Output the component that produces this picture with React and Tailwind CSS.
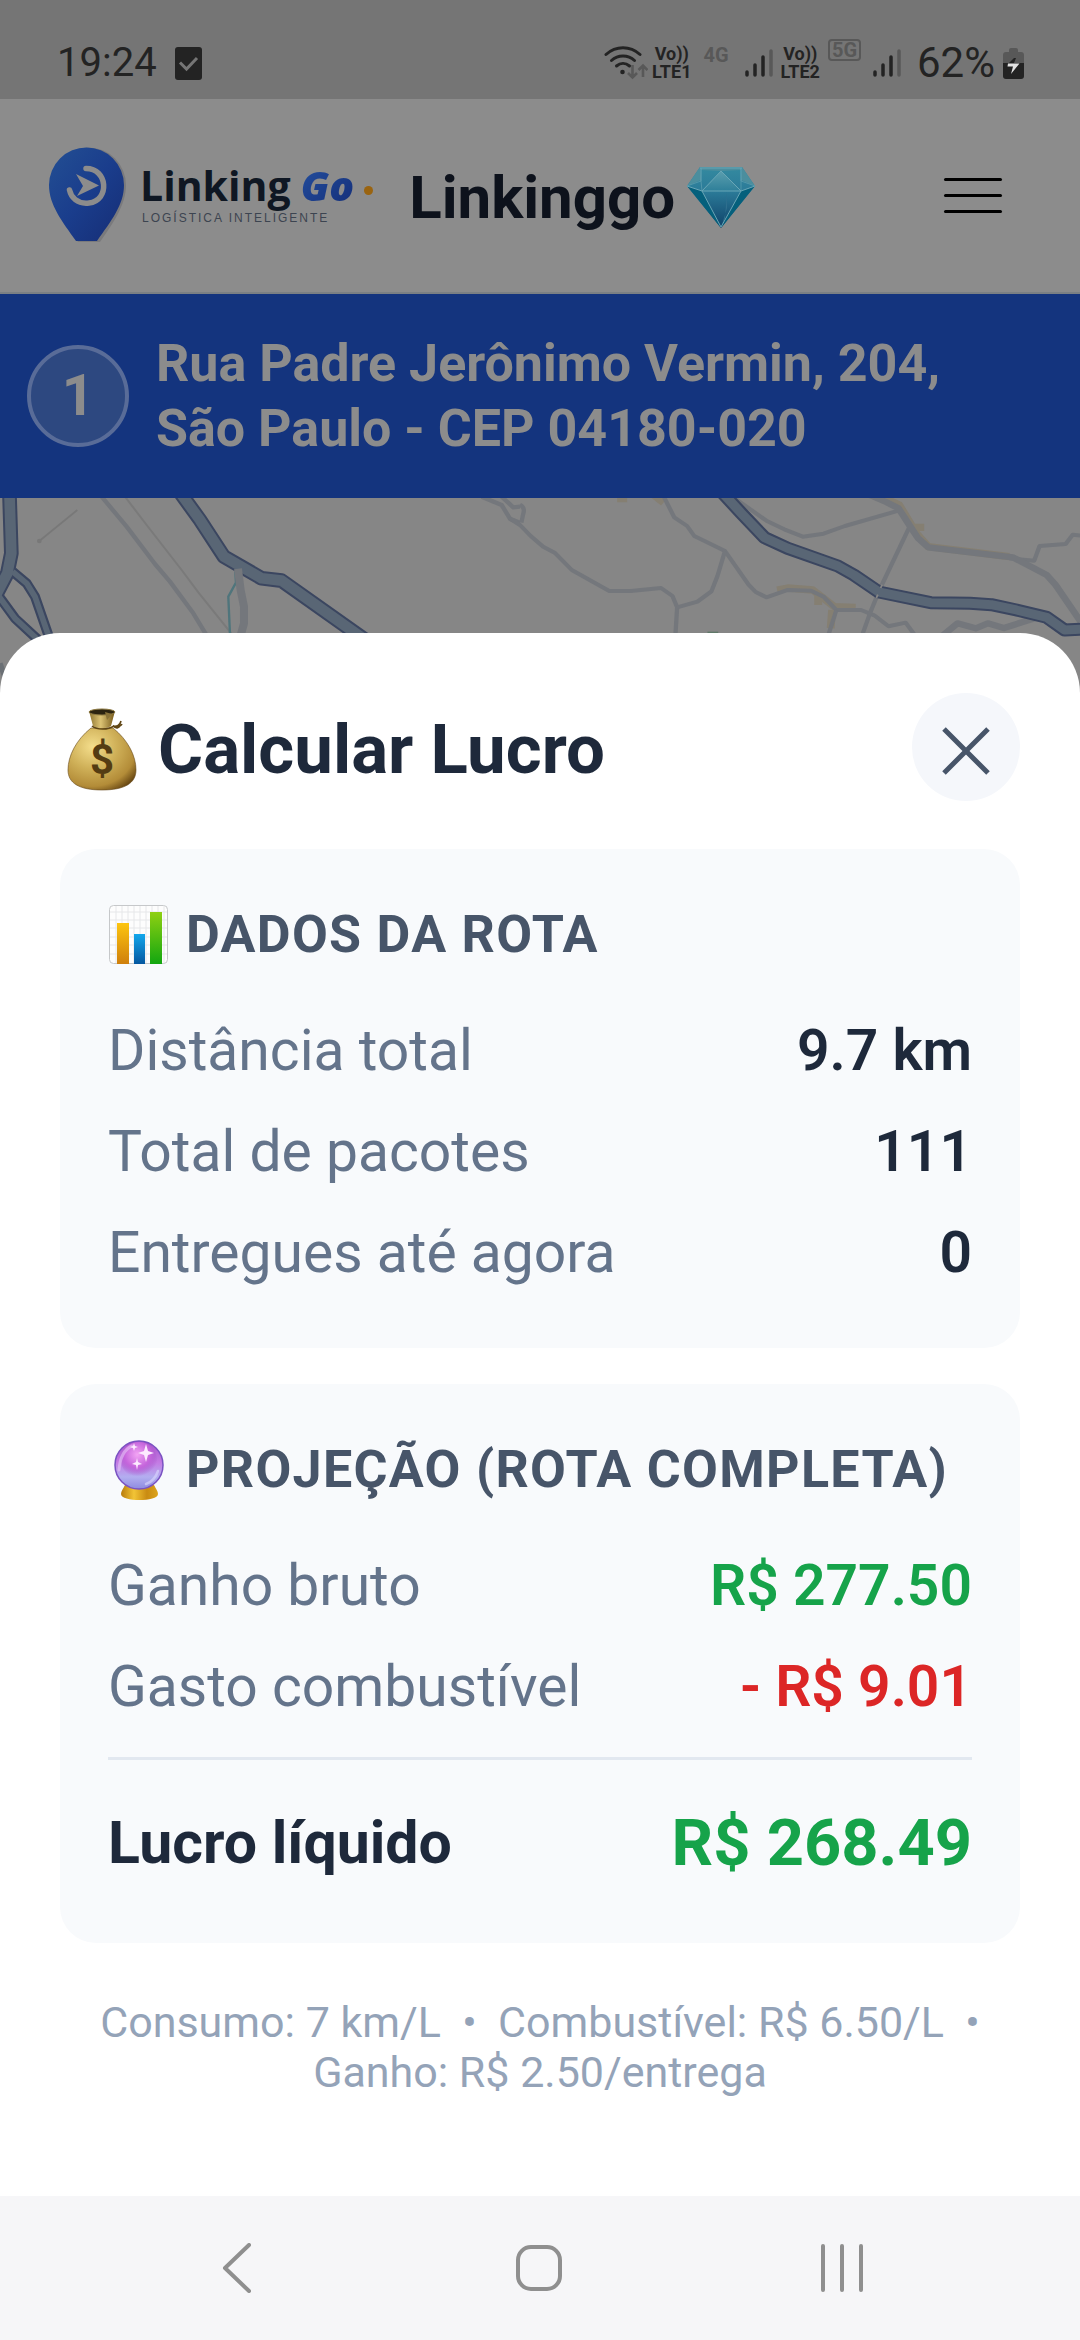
import React from "react";

function PhoneCheckIcon() {
  return (
    <svg viewBox="0 0 27 33" className="h-[33px] w-[27px]" aria-hidden="true">
      <rect width="27" height="33" rx="3" fill="#232323" />
      <path d="M5 15.5 11.5 22 22 11" fill="none" stroke="#757575" strokeWidth="3" />
    </svg>
  );
}

function WifiIcon() {
  return (
    <svg viewBox="0 0 44 34" className="h-[34px] w-[44px]" aria-hidden="true">
      <g fill="none" stroke="#232323" strokeWidth="3" strokeLinecap="round">
        <path d="M2 8.5C12-.5 26-.5 36 8.5" />
        <path d="M7.500 14.500C14 8.500 24 8.500 30.500 14.500" />
        <path d="M12.500 20C16.500 16.500 21.500 16.500 25.500 20" />
      </g>
      <circle cx="18.500" cy="26" r="2.300" fill="#232323" />
      <g fill="none" stroke="#585858" strokeWidth="2.600">
        <path d="M28.500 19v12M24 27l4.500 4.500L33 27M39 31V19.500M34.500 24l4.500-4.500L43.500 24" />
      </g>
    </svg>
  );
}

function SignalIcon() {
  return (
    <svg viewBox="0 0 28 30" className="h-[30px] w-[28px]" aria-hidden="true">
      <g strokeWidth="3.500" strokeLinecap="round" stroke="#232323">
        <path d="M2 24v3M10 17v10M18 9v18" />
        <path d="M26 3v24" stroke="#585858" />
      </g>
    </svg>
  );
}

function BatteryIcon() {
  return (
    <svg viewBox="0 0 21 31" className="h-[31px] w-[21px]" aria-hidden="true">
      <path d="M6 2a2 2 0 0 1 2-2h5a2 2 0 0 1 2 2v2h3a3 3 0 0 1 3 3v9H0V7a3 3 0 0 1 3-3h3z" fill="#585858" />
      <path d="M0 15h21v13a3 3 0 0 1-3 3H3a3 3 0 0 1-3-3z" fill="#232323" />
      <path d="M11 10h2l-2 5H6z" fill="#232323" />
      <path d="M5 15.500h11.500L8 26l2-7.500H4.500z" fill="#e2e2e2" />
    </svg>
  );
}

function VoLte({ line }) {
  return (
    <span className="flex flex-col items-center text-[18px] leading-[18px] font-bold text-[#232323]">
      <span>Vo))</span>
      <span>{line}</span>
    </span>
  );
}

function StatusBar() {
  return (
    <div className="flex h-[99px] items-end justify-between bg-[#757575] pr-14 pb-3 pl-[57px] text-[#232323]">
      <div className="flex items-center gap-[18px]">
        <span className="text-[40px] leading-[48px]">19:24</span>
        <PhoneCheckIcon />
      </div>
      <div className="flex h-12 items-center">
        <WifiIcon />
        <span className="ml-1">
          <VoLte line="LTE1" />
        </span>
        <span className="ml-3 self-start text-[20px] leading-[32px] font-bold text-[#585858]">4G</span>
        <span className="ml-4">
          <SignalIcon />
        </span>
        <span className="ml-2">
          <VoLte line="LTE2" />
        </span>
        <span className="ml-2 self-start rounded-[4px] border-2 border-[#585858] px-[2px] text-[20px] leading-[18px] font-bold text-[#585858]">
          5G
        </span>
        <span className="ml-3">
          <SignalIcon />
        </span>
        <span className="ml-4 text-[42px] leading-[48px]">62%</span>
        <span className="ml-2">
          <BatteryIcon />
        </span>
      </div>
    </div>
  );
}

function PinLogo() {
  return (
    <svg viewBox="0 0 80 98" className="h-[98px] w-[80px] shrink-0" aria-hidden="true">
      <defs>
        <linearGradient id="pin" x1="0" y1="0" x2="1" y2="1">
          <stop offset="0" stopColor="#234f93" />
          <stop offset="0.500" stopColor="#1a3d8c" />
          <stop offset="1" stopColor="#162d75" />
        </linearGradient>
      </defs>
      <path d="M30 95C16 74 3 58 3 38a37.500 37.500 0 0 1 75 0c0 20-13 38-26 57z" fill="#7a7a7c" />
      <path d="M28 94C14 74 1 58 1 38a37.500 37.500 0 0 1 75 0c0 20-13 36-27 56z" fill="url(#pin)" />
      <path
        d="M38 21.500c22 0 24 32 3 34.500-12 1.500-18-6-19.500-13"
        fill="none"
        stroke="#8c8c8c"
        strokeWidth="5.500"
        strokeLinecap="round"
      />
      <path d="M28 27l23 11.500L29 49l6-10z" fill="#8c8c8c" />
    </svg>
  );
}

function Diamond() {
  return (
    <svg viewBox="0 0 68 61" className="h-[61px] w-[68px] shrink-0" role="img" aria-label="Diamante">
      <defs>
        <linearGradient id="gem" x1="0" y1="0" x2="0" y2="1">
          <stop offset="0" stopColor="#348aa0" />
          <stop offset="0.400" stopColor="#2b7a98" />
          <stop offset="1" stopColor="#0f4269" />
        </linearGradient>
        <linearGradient id="gemTop" x1="0" y1="0" x2="0" y2="1">
          <stop offset="0" stopColor="#5b9eae" />
          <stop offset="1" stopColor="#2e7f99" />
        </linearGradient>
      </defs>
      <path d="M13 0h42l13 19-34 42L0 19z" fill="url(#gem)" />
      <path d="M0 19l15 5 19 37zM68 19l-14 5-20 37z" fill="#05607c" />
      <path d="M34 4l20 20H15z" fill="url(#gemTop)" />
      <path d="M13 0h42l-1 3-20 1-20-1zM0 19l13-19 1 13zM68 19L55 0l-1 13z" fill="#4b8e9e" />
      <path d="M40 25l-2 26-4 10 6-20z" fill="#2f6f8e" />
      <g fill="none" stroke="#69a6b6" strokeWidth="1">
        <path d="M13 1h42M14 1v13M54 1v13M34 4L15 24h39zM0 19l15 5 19 36 20-36 14-5" />
        <path d="M0 19l14-5 1 10M68 19l-14-5v10" strokeOpacity="0.600" />
      </g>
    </svg>
  );
}

function Header() {
  return (
    <header className="flex h-[195px] items-center justify-between border-b-2 border-[#7b8084] bg-[#8c8c8c] pr-[72px] pl-12">
      <div className="flex items-center">
        <PinLogo />
        <div className="ml-3 flex flex-col pb-1.5">
          <div className="flex items-baseline font-['Open_Sans'] text-[41px] leading-[50px] font-bold text-[#0f1723]">
            <span>Linking</span>
            <span className="ml-2.5 bg-linear-to-br from-[#2450a0] to-[#142c76] bg-clip-text pr-1 font-extrabold text-transparent italic">
              Go
            </span>
            <span className="mt-3 ml-1.5 size-[9px] self-center rounded-full bg-[#9a6410]" />
          </div>
          <span className="pl-0.5 font-['Liberation_Sans'] text-[12px] leading-[16px] tracking-[2px] text-[#3c4450]">
            LOGÍSTICA INTELIGENTE
          </span>
        </div>
        <h1 className="ml-9 pt-1 text-[60px] leading-[72px] font-bold text-[#0d121c]">Linkinggo</h1>
        <span className="ml-3 pt-1">
          <Diamond />
        </span>
      </div>
      <button type="button" aria-label="Menu" className="flex flex-col gap-[13px] p-1.5">
        <span className="h-[3px] w-[58px] rounded-full bg-black" />
        <span className="h-[3px] w-[58px] rounded-full bg-black" />
        <span className="h-[3px] w-[58px] rounded-full bg-black" />
      </button>
    </header>
  );
}

function StopBanner() {
  return (
    <div className="flex h-[204px] items-center gap-[27px] bg-[#14347e] px-[27px]">
      <span className="flex size-[102px] shrink-0 items-center justify-center rounded-full border-4 border-[#596c98] bg-[#2d4880] text-[57px] font-bold text-[#8c8c8c]">
        1
      </span>
      <p className="text-[52px] leading-[65px] font-bold text-[#8c8c8c]">
        Rua Padre Jerônimo Vermin, 204,
        <br />
        São Paulo - CEP 04180-020
      </p>
    </div>
  );
}

const HIGHWAYS_LEFT = [
  ["M28 0 L34 190 L22 250 L-20 330", 36],
  ["M535 0 L600 90 L672 200 L785 265 L845 272 L1110 460", 36],
];

const HIGHWAYS_LEFT_THIN = ["M38 245 L80 280 L105 320 L150 450", "M-10 310 L45 385 L115 450"];

const HIGHWAY_RIGHT =
  "M560 0 L620 70 L685 143 L750 175 L890 228 L935 255 L1005 306 L1150 338 L1260 340 L1320 344 L1390 360 L1475 382 L1525 420 L1580 417";

const ROADS_RIGHT = [
  "M-30 85 L0 105 L30 138 L65 170 L97 188 L145 240 L250 303 L310 303 L395 294 L427 318 L440 352 L435 440",
  "M398 10 L432 82 L468 108 L488 138 L574 183 L640 284 L660 306 L690 322 L750 300 L815 302 L850 320 L886 360 L955 360 L992 376 L1032 409 L1080 398 L1105 435",
  "M574 183 L553 258 L536 304 L497 335 L440 352",
  "M600 24 L690 92 L740 118 L792 140 L850 131 L910 108 L1060 62",
  "M1090 112 L1010 292 L980 370 L960 430",
  "M886 360 L862 440",
  "M1370 205 L1440 212 L1455 168 L1528 162 L1548 134 L1580 138",
];

const ROADS_RIGHT_WIDE = [
  "M980 15 L1025 36 L1060 55 L1092 108 L1115 145 L1143 172 L1380 202 L1475 255 L1500 285 L1570 395",
  "M1180 440 L1225 400 L1276 415 L1310 400 L1355 414 L1450 382",
];

function RouteMap() {
  return (
    <svg
      viewBox="0 0 1080 195"
      preserveAspectRatio="xMidYMin slice"
      className="h-[195px] w-full bg-[#868686]"
      role="img"
      aria-label="Mapa da rota"
    >
      <g transform="translate(0 -8) scale(0.3333)" fill="none" strokeLinejoin="round">
        <path d="M118 153L232 60" stroke="#787878" strokeWidth="5" />
        <circle cx="118" cy="153" r="7" fill="#787878" />
        <path d="M375 20L440 105L545 240L595 307L695 432" stroke="#7a7a7a" strokeWidth="6" />
        <path d="M305 20L380 110L465 222L510 275L580 370L620 436" stroke="#74777c" strokeWidth="13" />
        <path d="M1445 20L1505 45L1530 86L1560 98M1505 20L1540 52L1560 50" stroke="#74777c" strokeWidth="13" />
        <path d="M706 245L708 278L685 320L690 432" stroke="#4f757c" strokeWidth="7" />
        <path d="M0 520L14 560" stroke="#6b7075" strokeWidth="16" />
        {HIGHWAYS_LEFT_THIN.map((d) => (
          <path key={d} d={d} stroke="#3b4660" strokeWidth="30" />
        ))}
        {HIGHWAYS_LEFT.map(([d, w]) => (
          <path key={d} d={d} stroke="#3b4660" strokeWidth={w + 8} />
        ))}
        {HIGHWAYS_LEFT_THIN.map((d) => (
          <path key={d} d={d} stroke="#596675" strokeWidth="17" />
        ))}
        {HIGHWAYS_LEFT.map(([d, w]) => (
          <path key={d} d={d} stroke="#596675" strokeWidth={w - 4} />
        ))}
        <path d="M714 236L722 300L732 350V400L722 436" stroke="#74777c" strokeWidth="24" />
      </g>
      <g transform="translate(520 -8) scale(0.3571 0.3333)" fill="none" strokeLinejoin="round">
        <path d="M720 300L750 294L820 300L880 350L940 352M835 310L835 345M874 360L870 415" stroke="#857f72" strokeWidth="22" />
        <path d="M1020 24L1062 45L1110 130L1143 170L1370 200M1105 112H1132M375 15L402 38M272 26H300" stroke="#857f72" strokeWidth="22" />
        <path d="M525 430H555" stroke="#5f7868" strokeWidth="10" />
        {ROADS_RIGHT.map((d) => (
          <path key={d} d={d} stroke="#74777c" strokeWidth="12" />
        ))}
        {ROADS_RIGHT_WIDE.map((d) => (
          <path key={d} d={d} stroke="#74777c" strokeWidth="19" />
        ))}
        <path d="M0 44Q16 52 8 76L4 98" stroke="#74777c" strokeWidth="12" />
        <path d={HIGHWAY_RIGHT} stroke="#3b4660" strokeWidth="39" />
        <path d={HIGHWAY_RIGHT} stroke="#596675" strokeWidth="27" />
        <path d="M1014 284L1010 294M1002 314L998 324" stroke="#868686" strokeWidth="5" />
      </g>
    </svg>
  );
}

function MoneyBag() {
  return (
    <svg viewBox="0 0 72 84" className="h-[84px] w-[72px] shrink-0" aria-hidden="true">
      <defs>
        <radialGradient id="bag" cx="0.360" cy="0.300" r="0.800">
          <stop offset="0" stopColor="#f4de8c" />
          <stop offset="0.450" stopColor="#cfb058" />
          <stop offset="0.800" stopColor="#b38c38" />
          <stop offset="1" stopColor="#684712" />
        </radialGradient>
        <linearGradient id="neck" x1="0" y1="0" x2="1" y2="0">
          <stop offset="0" stopColor="#8d7430" />
          <stop offset="0.450" stopColor="#dcc374" />
          <stop offset="1" stopColor="#755818" />
        </linearGradient>
      </defs>
      <path d="M25 20C10 32 2 48 2 62c0 13 11 20 34 20s34-7 34-20c0-14-8-30-23-42z" fill="url(#bag)" stroke="#67491a" strokeOpacity="0.600" />
      <path d="M23 3l4 15c4 3 14 3 18 0l4-15z" fill="url(#neck)" />
      <ellipse cx="36" cy="4" rx="13" ry="3" fill="#2c2410" stroke="#8c7840" strokeWidth="1" />
      <path d="M39 4l7 2-5 6z" fill="#8a7338" />
      <path d="M26 18c5 4 16 4 22 0M47 18c4 1 7-1 8-5M47 18c5 1 8 0 9-2M47 18c3 3 6 2 7 0" fill="none" stroke="#5f4514" strokeWidth="1.600" />
      <text x="36" y="66" textAnchor="middle" fontFamily="Roboto, sans-serif" fontSize="42" fontWeight="700" fill="#543c12">
        $
      </text>
    </svg>
  );
}

function BarChart() {
  return (
    <svg viewBox="0 0 60 60" className="size-[60px] shrink-0" aria-hidden="true">
      <defs>
        <linearGradient id="barA" x1="0" y1="0" x2="0" y2="1">
          <stop offset="0" stopColor="#fdc50f" />
          <stop offset="1" stopColor="#cf7f0c" />
        </linearGradient>
        <linearGradient id="barB" x1="0" y1="0" x2="0" y2="1">
          <stop offset="0" stopColor="#12a7ec" />
          <stop offset="1" stopColor="#0557a0" />
        </linearGradient>
        <linearGradient id="barC" x1="0" y1="0" x2="0" y2="1">
          <stop offset="0" stopColor="#8fd012" />
          <stop offset="1" stopColor="#12a610" />
        </linearGradient>
      </defs>
      <rect x="1.500" y="0.500" width="58" height="58" rx="4" fill="#fdfdfd" stroke="#c6c8ca" />
      <path
        d="M8 1v57M14 1v57M20 1v57M26 1v57M32 1v57M38 1v57M44 1v57M50 1v57M56 1v57M2 7h57M2 15h57M2 23h57M2 32h57M2 40h57M2 49h57"
        stroke="#e6e7e9"
      />
      <rect x="9" y="18" width="12" height="41" fill="url(#barA)" />
      <rect x="26" y="29" width="11" height="30" fill="url(#barB)" />
      <rect x="42" y="7" width="12" height="52" fill="url(#barC)" />
    </svg>
  );
}

function CrystalBall() {
  return (
    <svg viewBox="0 0 60 62" className="h-[62px] w-[60px] shrink-0" aria-hidden="true">
      <defs>
        <linearGradient id="orb" x1="0" y1="0" x2="0" y2="1">
          <stop offset="0" stopColor="#a552c8" />
          <stop offset="0.450" stopColor="#c47be4" />
          <stop offset="0.750" stopColor="#b3aef0" />
          <stop offset="1" stopColor="#8d8ae0" />
        </linearGradient>
        <radialGradient id="orbCore" cx="0.450" cy="0.350" r="0.600">
          <stop offset="0" stopColor="#f3a5f4" />
          <stop offset="0.600" stopColor="#c565dc" />
          <stop offset="1" stopColor="#9d4fc6" stopOpacity="0" />
        </radialGradient>
        <linearGradient id="stand" x1="0" y1="0" x2="1" y2="0">
          <stop offset="0" stopColor="#b97c0c" />
          <stop offset="0.350" stopColor="#f2c436" />
          <stop offset="0.700" stopColor="#c98b12" />
          <stop offset="1" stopColor="#dca41c" />
        </linearGradient>
      </defs>
      <path d="M17 46c-2 4-4 6-4 9 0 8 37 8 37 0 0-3-2-5-4-9z" fill="url(#stand)" />
      <circle cx="31" cy="26" r="24" fill="url(#orb)" stroke="#7a52c2" strokeWidth="1.500" />
      <circle cx="31" cy="21" r="18" fill="url(#orbCore)" />
      <path d="M11 31C12 18 17 10 24 7" fill="none" stroke="#e6c4f6" strokeWidth="3" strokeLinecap="round" opacity="0.600" />
      <path d="M38 45c6-2 10-7 12-13" fill="none" stroke="#d5d2fb" strokeWidth="2.500" strokeLinecap="round" opacity="0.700" />
      <path
        d="M38 5l2 7 6 2-6 2-2 7-2-7-6-2 6-2zM29 19l1 4 4 2-4 1-1 5-1-5-4-1 4-2zM26 4l1 3 3 1-3 1-1 3-1-3-3-1 3-1z"
        fill="#fdeaff"
      />
    </svg>
  );
}

function Row({ label, value, tone = "text-[#1e293b]" }) {
  return (
    <div className="flex items-center justify-between py-4 text-[57px] leading-[69px]">
      <dt className="text-[#64748b]">{label}</dt>
      <dd className={`font-semibold ${tone}`}>{value}</dd>
    </div>
  );
}

function Card({ icon, title, children }) {
  return (
    <section className="rounded-[36px] bg-[#f8fafc] px-12 pt-12 pb-[45px]">
      <h3 className="mb-[27px] flex items-center gap-[18px] text-[52px] leading-[76px] font-bold tracking-wide text-[#475569]">
        {icon}
        <span>{title}</span>
      </h3>
      <dl>{children}</dl>
    </section>
  );
}

function ProfitSheet() {
  return (
    <section
      role="dialog"
      aria-labelledby="sheet-title"
      className="relative -mt-[60px] flex-1 rounded-t-[60px] bg-white px-[60px] pt-[60px] pb-12"
    >
      <div className="mb-12 flex items-center justify-between">
        <div className="flex items-center gap-5 pt-1.5 pl-1.5">
          <MoneyBag />
          <h2 id="sheet-title" className="text-[69px] leading-[84px] font-bold text-[#1e293b]">
            Calcular Lucro
          </h2>
        </div>
        <button
          type="button"
          aria-label="Fechar"
          className="flex size-[108px] items-center justify-center rounded-full bg-[#f5f7fb]"
        >
          <svg viewBox="0 0 48 48" className="mt-2 size-12" aria-hidden="true">
            <path d="M2 2l44 44M46 2L2 46" stroke="#475569" strokeWidth="5" />
          </svg>
        </button>
      </div>

      <div className="flex flex-col gap-9">
        <Card icon={<BarChart />} title="DADOS DA ROTA">
          <Row label="Distância total" value="9.7 km" />
          <Row label="Total de pacotes" value="111" />
          <Row label="Entregues até agora" value="0" />
        </Card>
        <Card icon={<CrystalBall />} title="PROJEÇÃO (ROTA COMPLETA)">
          <Row label="Ganho bruto" value="R$ 277.50" tone="text-[#16a34a]" />
          <Row label="Gasto combustível" value="- R$ 9.01" tone="text-[#dc2626]" />
          <div className="mt-5 flex items-center justify-between border-t-[3px] border-[#e2e8f0] pt-11 pb-4 leading-[78px] font-bold">
            <dt className="text-[59px] text-[#1e293b]">Lucro líquido</dt>
            <dd className="text-[65px] text-[#16a34a]">R$ 268.49</dd>
          </div>
        </Card>
      </div>

      <p className="mt-[54px] text-center text-[43px] leading-[50px] text-[#94a3b8]">
        Consumo: 7 km/L &nbsp;•&nbsp; Combustível: R$ 6.50/L &nbsp;• Ganho: R$ 2.50/entrega
      </p>
    </section>
  );
}

function SystemNav() {
  return (
    <nav className="flex h-36 items-center justify-between bg-[#f6f6f8] px-[212px]">
      <button type="button" aria-label="Voltar">
        <svg viewBox="0 0 48 50" className="h-[50px] w-12" aria-hidden="true">
          <path d="M37 2L13 25l24 23" fill="none" stroke="#8f8f8f" strokeWidth="4" strokeLinecap="round" strokeLinejoin="round" />
        </svg>
      </button>
      <button type="button" aria-label="Início">
        <svg viewBox="0 0 48 48" className="size-12" aria-hidden="true">
          <rect x="2" y="3" width="42" height="42" rx="13" fill="none" stroke="#8f8f8f" strokeWidth="4" />
        </svg>
      </button>
      <button type="button" aria-label="Recentes">
        <svg viewBox="0 0 48 48" className="size-12" aria-hidden="true">
          <path d="M3 2v44M22 2v44M41 2v44" fill="none" stroke="#8f8f8f" strokeWidth="4" strokeLinecap="round" />
        </svg>
      </button>
    </nav>
  );
}

export default function App() {
  return (
    <div className="flex min-h-screen flex-col bg-white font-['Roboto',sans-serif]">
      <StatusBar />
      <Header />
      <StopBanner />
      <RouteMap />
      <ProfitSheet />
      <SystemNav />
    </div>
  );
}
